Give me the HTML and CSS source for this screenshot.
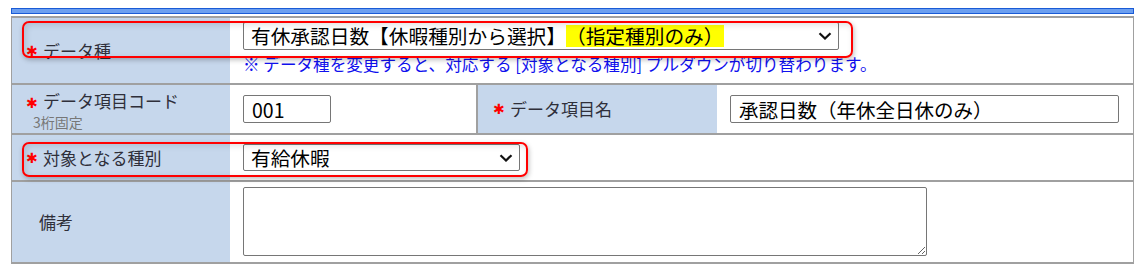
FILE: index.html
```html
<!DOCTYPE html>
<html lang="ja">
<head>
  <meta charset="utf-8">
  <title>データ項目設定</title>
  <link rel="stylesheet" href="styles.css">
</head>
<body>
<div class="page">
  <div class="topbar"></div>

  <div class="form">
    <!-- データ種 -->
    <div class="row row-type">
      <div class="label"><span class="req">✱</span>データ種</div>
      <div class="value value-type">
        <div class="select select-type" role="combobox">
          <span class="select-text">有休承認日数【休暇種別から選択】<mark class="hl">（指定種別のみ）</mark></span>
          <svg class="chev" width="14" height="8" viewBox="0 0 14 8"><polyline points="1.5,1.2 7,6.5 12.5,1.2" /></svg>
        </div>
        <p class="note">※ データ種を変更すると、対応する [対象となる種別] プルダウンが切り替わります。</p>
      </div>
    </div>

    <!-- コード / 名称 -->
    <div class="row row-code">
      <div class="label label-stack">
        <div><span class="req">✱</span>データ項目コード</div>
        <div class="sub">3桁固定</div>
      </div>
      <div class="value"><input class="text text-code" type="text" value="001"></div>
      <div class="label label-name"><span class="req">✱</span>データ項目名</div>
      <div class="value value-name"><input class="text text-name" type="text" value="承認日数（年休全日休のみ）"></div>
    </div>

    <!-- 対象となる種別 -->
    <div class="row row-kind">
      <div class="label"><span class="req">✱</span>対象となる種別</div>
      <div class="value">
        <div class="select select-kind" role="combobox">
          <span class="select-text">有給休暇</span>
          <svg class="chev" width="14" height="8" viewBox="0 0 14 8"><polyline points="1.5,1.2 7,6.5 12.5,1.2" /></svg>
        </div>
      </div>
    </div>

    <!-- 備考 -->
    <div class="row row-memo">
      <div class="label label-plain">備考</div>
      <div class="value value-memo"><textarea class="memo"></textarea></div>
    </div>
  </div>

  <!-- 注目枠 -->
  <div class="callout callout-type"></div>
  <div class="callout callout-kind"></div>
</div>
</body>
</html>
```

FILE: styles.css
```css
body {
  margin: 0;
  background: #fff;
  font-family: "Noto Sans CJK JP", "Noto Sans", sans-serif;
  color: #333;
}
.page {
  position: relative;
  padding: 8px 0 0 11px;
}
.topbar {
  width: 1121px;
  height: 4px;
  border: 1px solid #1a5bd6;
  background: #6c9ff0;
  margin-bottom: 2px;
}

.form {
  width: 1123px;
  box-sizing: border-box;
  border: 1px solid #a0a0a0;
  border-top-width: 2px;
  border-bottom-width: 2px;
}
.row {
  display: grid;
  grid-template-columns: 218px 1fr;
  box-sizing: border-box;
  border-top: 2px solid #a0a0a0;
}
.row:first-child {
  border-top: 0;
}
.row-type { height: 65px; }
.row-code {
  height: 50px;
  grid-template-columns: 218px 246px 241px 1fr;
}
.row-kind { height: 47px; }
.row-memo { height: 82px; }

.label {
  display: flex;
  align-items: center;
  padding-left: 14px;
  background: #c6d7ec;
  font-size: 17px;
  line-height: 22px;
  color: #2f2f3a;
}
.label-stack {
  flex-direction: column;
  align-items: flex-start;
  justify-content: center;
  padding-top: 2px;
}
.label-stack .sub {
  padding-left: 7px;
  font-size: 14px;
  line-height: 17px;
  color: #777;
}
.label-name {
  border-left: 2px solid #a0a0a0;
  padding-left: 15px;
}
.label-plain {
  padding-left: 27px;
}
.req {
  display: inline-block;
  width: 17px;
  color: #f00;
  font-family: "DejaVu Sans", sans-serif;
  font-size: 14px;
  font-weight: bold;
}

.value {
  display: flex;
  align-items: center;
  padding-left: 13px;
}
.value-type {
  flex-direction: column;
  align-items: flex-start;
  justify-content: flex-start;
  padding-top: 4px;
}
.value-memo {
  align-items: flex-start;
  padding-top: 5px;
}

.select {
  display: flex;
  align-items: center;
  justify-content: space-between;
  box-sizing: border-box;
  height: 28px;
  padding: 0 6px 0 7px;
  border: 1px solid #767676;
  border-radius: 2px;
  background: #fff;
  color: #000;
  font-size: 19.7px;
  line-height: 26px;
}
.select-type { width: 596px; }
.select-kind { width: 277px; height: 27px; }
.select-text { white-space: nowrap; }
.hl {
  background: #ffff00;
  color: #000;
  line-height: 22px;
  display: inline-block;
}
.chev polyline {
  fill: none;
  stroke: #111;
  stroke-width: 2.2;
}

.note {
  margin: 4px 0 0;
  font-size: 16.6px;
  line-height: 20px;
  color: #1010ee;
  white-space: nowrap;
}

.text {
  box-sizing: border-box;
  height: 28px;
  margin: 0;
  padding: 0 8px;
  border: 1px solid #767676;
  border-radius: 2px;
  font-family: "Noto Sans CJK JP", sans-serif;
  font-size: 19.5px;
  color: #000;
}
.text-code { width: 88px; }
.text-name { width: 389px; }

.memo {
  box-sizing: border-box;
  width: 684px;
  height: 69px;
  margin: 0;
  border: 1px solid #767676;
  border-radius: 2px;
  font-family: "Noto Sans CJK JP", sans-serif;
}

.callout {
  position: absolute;
  box-sizing: border-box;
  border: 2px solid #ff0000;
  border-radius: 7px;
  box-shadow: 1px 2px 5px rgba(0, 0, 0, 0.25), inset 2px 2px 6px rgba(0, 0, 0, 0.12);
  pointer-events: none;
}
.callout-type {
  left: 22px;
  top: 21px;
  width: 831px;
  height: 37px;
}
.callout-kind {
  left: 22px;
  top: 142px;
  width: 506px;
  height: 35px;
}
```
